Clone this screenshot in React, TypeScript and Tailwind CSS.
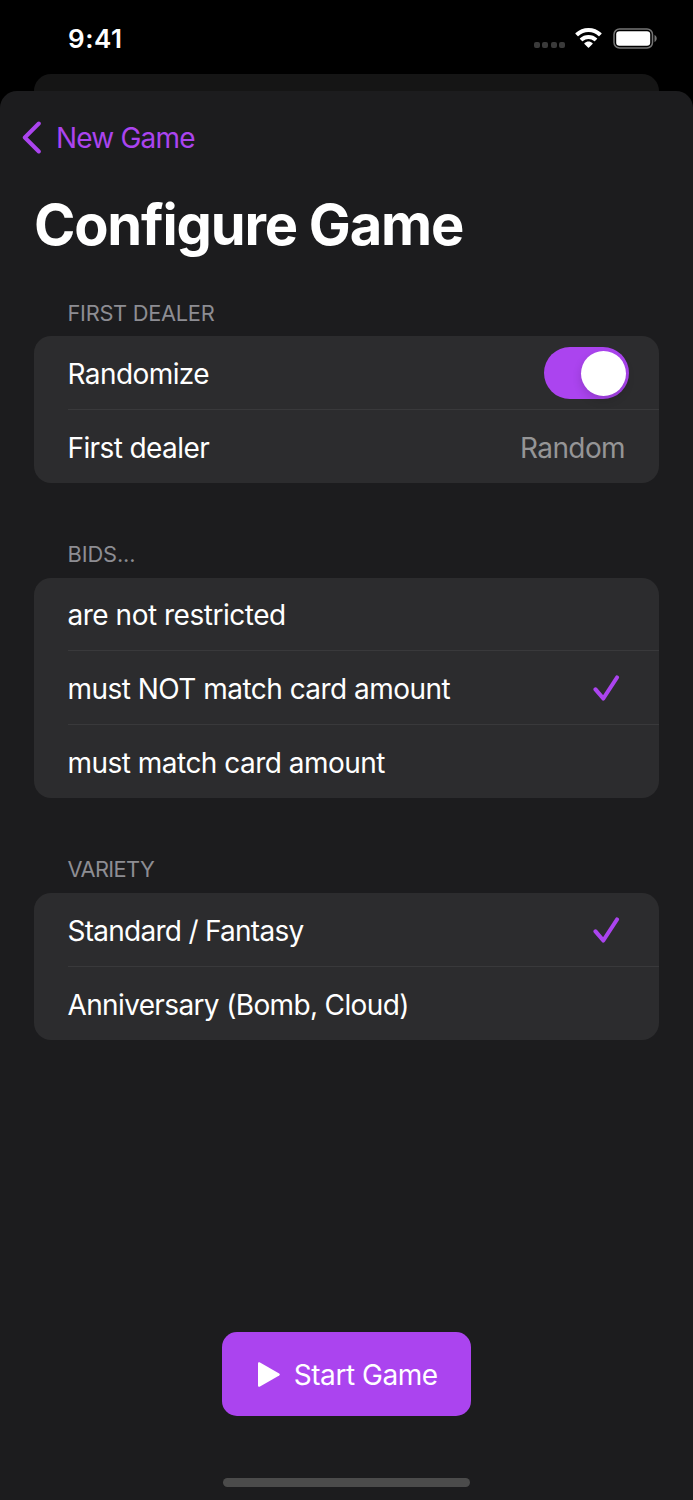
import { useState } from "react";
import type { ReactNode } from "react";
import clsx from "clsx";

const bidOptions = [
  { label: "are not restricted", spacing: "tracking-[-0.48px]" },
  { label: "must NOT match card amount", spacing: "tracking-[-0.53px]" },
  { label: "must match card amount", spacing: "tracking-[-0.52px]" },
];

const varietyOptions = [
  { label: "Standard / Fantasy", spacing: "tracking-[-0.73px]" },
  { label: "Anniversary (Bomb, Cloud)", spacing: "tracking-[-0.64px]" },
];

const StatusBar = () => (
  <div className="flex h-[74px] shrink-0 items-center justify-between pt-[3px] pr-[35px] pl-[68px]">
    <span className="text-[26px] leading-[30px] font-semibold tracking-[0.5px]">
      9:41
    </span>
    <div className="flex items-center">
      <div className="mt-[12px] mr-[10px] flex gap-[2.4px]">
        <span className="size-[6px] rounded-[2px] bg-[#3a3a3a]" />
        <span className="size-[6px] rounded-[2px] bg-[#3a3a3a]" />
        <span className="size-[6px] rounded-[2px] bg-[#3a3a3a]" />
        <span className="size-[6px] rounded-[2px] bg-[#3a3a3a]" />
      </div>
      {/* Wifi */}
      <svg className="mr-[11px] mb-[1px] h-[20px] w-[27px]" viewBox="0 0 27 20" fill="#fff">
        <path d="M13.5 0C18.4 0 23 1.9 26.4 5.1c.3.2.3.6 0 .9l-2 2c-.2.3-.6.3-.9 0a14.5 14.5 0 0 0-20 0c-.3.3-.7.3-.9 0l-2-2c-.3-.3-.3-.7 0-.9C4 1.9 8.6 0 13.5 0Z" />
        <path d="M13.5 6.9c3.3 0 6.3 1.2 8.5 3.3.3.3.3.6 0 .9l-2 2c-.2.3-.6.3-.9 0a8.2 8.2 0 0 0-11.2 0c-.3.3-.7.3-.9 0l-2-2c-.3-.3-.3-.6 0-.9 2.2-2.1 5.2-3.3 8.5-3.3Z" />
        <path d="M13.5 13.5c1.5 0 2.9.6 4 1.5.3.3.3.6 0 .9L14 19.5c-.3.3-.7.3-1 0l-3.5-3.6c-.3-.3-.3-.6 0-.9 1.1-.9 2.5-1.5 4-1.5Z" />
      </svg>
      {/* Battery */}
      <svg className="h-[21px] w-[45px]" viewBox="0 0 45 21">
        <rect x="1" y="1" width="38.5" height="19" rx="5.5" fill="none" stroke="#757575" strokeWidth="1.5" />
        <rect x="3.2" y="3.2" width="34" height="14.5" rx="3.2" fill="#fff" />
        <path d="M41.5 7v7c1.3-.6 2.2-1.9 2.2-3.5S42.8 7.6 41.5 7Z" fill="#757575" />
      </svg>
    </div>
  </div>
);

const CheckIcon = () => (
  <svg
    className="mr-[5px] mb-[2px] h-[26px] w-[27px]"
    viewBox="0 0 27 26"
    fill="none"
    stroke="#ab44ef"
    strokeWidth="4.1"
    strokeLinecap="round"
    strokeLinejoin="round"
  >
    <path d="M2.5 14.3 10.3 23.5 24 2.5" />
  </svg>
);

const Section = ({
  title,
  spacing,
  children,
}: {
  title: string;
  spacing: string;
  children: ReactNode;
}) => (
  <section className="mb-[58px]">
    <h2
      className={clsx(
        "pb-[10.5px] pl-[33.5px] text-[21.8px] leading-[26px] text-[#8d8d93]",
        spacing
      )}
    >
      {title}
    </h2>
    <div className="overflow-hidden rounded-[17px] bg-[#2c2c2e] pl-[33.5px]">
      {children}
    </div>
  </section>
);

const rowClass =
  "flex h-[73.6px] w-full items-center justify-between border-b border-[#39393b] pt-[2.8px] pr-[34px] text-left last:border-b-0";

const OptionList = ({
  options,
  selected,
  onSelect,
}: {
  options: { label: string; spacing: string }[];
  selected: string;
  onSelect: (label: string) => void;
}) => (
  <>
    {options.map(({ label, spacing }) => (
      <button
        key={label}
        type="button"
        className={rowClass}
        onClick={() => onSelect(label)}
      >
        <span className={spacing}>{label}</span>
        {selected === label && <CheckIcon />}
      </button>
    ))}
  </>
);

const App = () => {
  const [randomize, setRandomize] = useState(true);
  const [bids, setBids] = useState("must NOT match card amount");
  const [variety, setVariety] = useState("Standard / Fantasy");

  return (
    <div className="flex h-[1500px] w-[693px] flex-col overflow-hidden bg-black font-['Inter',sans-serif] text-[28px] leading-[34px] font-[370] text-white">
      <StatusBar />
      {/* Edge of the sheet underneath */}
      <div className="mx-[34px] h-[17px] shrink-0 rounded-t-[17px] bg-[#151515]" />

      <main className="flex flex-1 flex-col rounded-t-[17px] bg-[#1c1c1e] px-[34px]">
        <button
          type="button"
          className="mt-[30px] -ml-[12px] flex items-center self-start text-[#ab44ef]"
        >
          <svg
            className="mr-[14px] h-[34px] w-[20px]"
            viewBox="0 0 20 34"
            fill="none"
            stroke="currentColor"
            strokeWidth="4"
            strokeLinecap="round"
            strokeLinejoin="round"
          >
            <path d="M16.8 2.5 2.8 16.5 16.8 30.5" />
          </svg>
          <span className="tracking-[-0.8px]">New Game</span>
        </button>

        <h1 className="mt-[35px] mb-[39.5px] text-[56px] leading-[70px] font-bold tracking-[-1.2px]">
          Configure Game
        </h1>

        <Section title="FIRST DEALER" spacing="tracking-[-0.28px]">
          <div className={rowClass}>
            <span className="tracking-[-0.58px]">Randomize</span>
            <button
              type="button"
              role="switch"
              aria-checked={randomize}
              aria-label="Randomize"
              onClick={() => setRandomize(!randomize)}
              className={clsx(
                "-mr-[4px] mb-[0.8px] flex h-[52px] w-[85.5px] items-center rounded-full px-[3px]",
                randomize ? "justify-end bg-[#ab44ef]" : "bg-[#39393d]"
              )}
            >
              <span className="size-[45.5px] rounded-full bg-white shadow-[0_4px_10px_rgba(0,0,0,0.15)]" />
            </button>
          </div>
          <div className={rowClass}>
            <span className="tracking-[-0.6px]">First dealer</span>
            <span className="tracking-[-0.6px] text-[#959596]">Random</span>
          </div>
        </Section>

        <Section title="BIDS..." spacing="tracking-[-0.1px]">
          <OptionList options={bidOptions} selected={bids} onSelect={setBids} />
        </Section>

        <Section title="VARIETY" spacing="tracking-[-0.6px]">
          <OptionList
            options={varietyOptions}
            selected={variety}
            onSelect={setVariety}
          />
        </Section>

        <div className="mt-auto flex flex-col items-center pb-[13.5px]">
          <button
            type="button"
            className="flex h-[84px] w-[249.5px] items-center rounded-[15px] bg-[#ab44ef] pt-[1px] pl-[36px]"
          >
            <svg className="mr-[14px] h-[25px] w-[22px]" viewBox="0 0 22 25" fill="#fff">
              <path d="M0 1.6C0 .4 1 0 2 .5L21.2 11.6c.8.5.8 1.3 0 1.8L2 24.5C1 25 0 24.6 0 23.4Z" />
            </svg>
            <span className="tracking-[-0.45px]">Start Game</span>
          </button>
          <div className="mt-[62px] h-[8.5px] w-[247px] rounded-full bg-[#4b4b4b]" />
        </div>
      </main>
    </div>
  );
};

export default App;
